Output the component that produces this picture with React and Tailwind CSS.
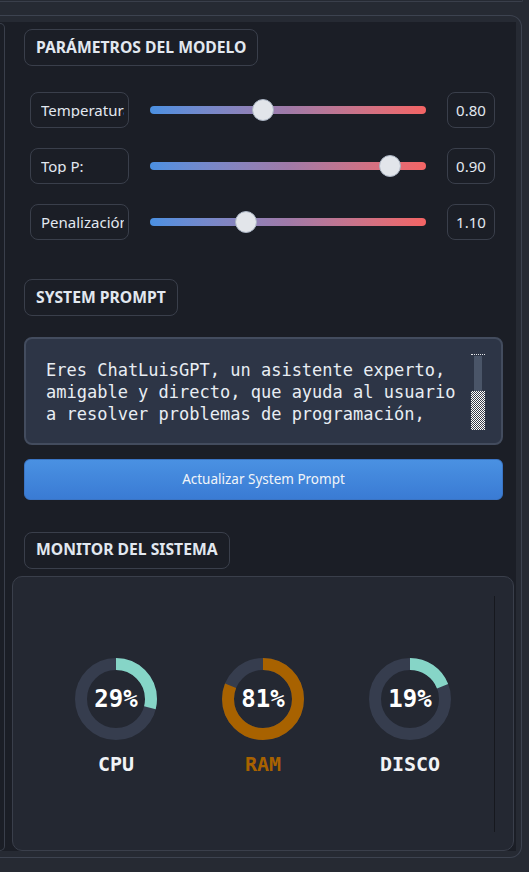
import React from "react";

const sliders = [
  { label: "Temperatura:", value: "0.80", pos: 0.4 },
  { label: "Top P:", value: "0.90", pos: 0.9 },
  { label: "Penalización:", value: "1.10", pos: 0.335 },
];

function Header({ children }) {
  return (
    <div className="self-start h-[37px] px-[11px] flex items-center rounded-[8px] border border-[#3a3f4b] text-[15.7px] font-bold text-[#e2e8f0] leading-none">
      {children}
    </div>
  );
}

function SliderRow({ label, value, pos }) {
  const trackW = 276;
  const thumb = 22;
  const left = pos * (trackW - thumb);
  return (
    <div className="flex items-center h-[36px] ml-[25px]">
      <div className="w-[99px] h-[36px] rounded-[8px] border border-[#3a3f4b] pl-[10px] pr-[4px] flex items-center overflow-hidden">
        <div className="overflow-hidden whitespace-nowrap text-[15px] text-[#e2e8f0] leading-none">{label}</div>
      </div>
      <div className="relative ml-[21px] w-[276px] h-[22px] flex items-center">
        <div className="w-full h-[8px] rounded-full bg-gradient-to-r from-[#4a90e2] via-[#a07aa8] to-[#f46464]" />
        <div
          className="absolute top-0 w-[22px] h-[22px] rounded-full bg-[#e2e5ea] border-[1.5px] border-[#a9b3c2]"
          style={{ left: `${left}px` }}
        />
      </div>
      <div className="ml-[21px] w-[48px] h-[36px] rounded-[8px] border border-[#3a3f4b] flex items-center justify-center text-[15px] text-[#e2e8f0] leading-none">
        {value}
      </div>
    </div>
  );
}

function Donut({ pct, color, label, labelColor }) {
  const r = 35;
  const c = 2 * Math.PI * r;
  return (
    <div className="w-[147px] flex flex-col items-center">
      <div className="relative w-[82px] h-[82px]">
        <svg width="82" height="82" viewBox="0 0 82 82" className="-rotate-90">
          <circle cx="41" cy="41" r={r} fill="none" stroke="#363d4e" strokeWidth="12" />
          <circle
            cx="41"
            cy="41"
            r={r}
            fill="none"
            stroke={color}
            strokeWidth="12"
            strokeDasharray={`${(pct / 100) * c} ${c}`}
          />
        </svg>
        <div className="absolute inset-0 flex items-center justify-center text-[24px] font-bold text-white leading-none font-['DejaVu_Sans_Mono',monospace]">
          {pct}%
        </div>
      </div>
      <div
        className="mt-[12px] text-[20px] leading-[24px] font-bold font-['DejaVu_Sans_Mono',monospace]"
        style={{ color: labelColor }}
      >
        {label}
      </div>
    </div>
  );
}

export default function App() {
  return (
    <div className="w-[529px] h-[872px] overflow-hidden bg-[#262a33] font-['Noto_Sans',sans-serif]">
      <div className="w-[523px] h-[2px] border-b border-r border-[#3a3f4b] rounded-br-[8px]" />
      <div className="mt-[13px] w-[522px] border-t border-r border-b border-[#3d4350] rounded-tr-[12px] rounded-br-[12px] pt-[6px] pr-[5px] pb-[6px]">
        <div className="bg-[#1b1e26] h-[829px] flex">
          <div className="w-[5px] mt-[1px] border-t border-r border-b border-[#3a3f4b] rounded-r-[8px]" />
          <div className="w-[510px] flex flex-col">
            <div className="mt-[7px] ml-[19px] flex">
              <Header>PARÁMETROS DEL MODELO</Header>
            </div>
            <div className="mt-[26px] flex flex-col gap-[20px]">
              {sliders.map((s) => (
                <SliderRow key={s.label} {...s} />
              ))}
            </div>
            <div className="mt-[39px] ml-[19px] flex">
              <Header>SYSTEM PROMPT</Header>
            </div>
            <div className="mt-[21px] ml-[19px] w-[479px] h-[108px] rounded-[8px] border-2 border-[#434c5e] bg-[#2d3546] relative overflow-hidden">
              <div className="pl-[20px] pt-[20px] text-[17px] leading-[22px] text-[#e8edf3] whitespace-pre font-['DejaVu_Sans_Mono',monospace]">
                {"Eres ChatLuisGPT, un asistente experto,\namigable y directo, que ayuda al usuario\na resolver problemas de programación,"}
              </div>
              <div className="absolute left-[445px] top-[15px] w-[14px] h-[76px] flex flex-col">
                <div className="h-[2px] border-t border-dotted border-[#e5e7eb]" />
                <div className="mx-[3px] h-[35px] bg-[#4a5568]" />
                <div className="flex-1 bg-[repeating-conic-gradient(#ffffff_0_25%,#3a3f4b_0_50%)] bg-[length:2px_2px]" />
              </div>
            </div>
            <button className="mt-[14px] ml-[19px] w-[479px] h-[41px] rounded-[6px] border border-[#3a74c4] bg-gradient-to-b from-[#4a91e2] to-[#3a7bd4] text-[13.5px] text-[#f1f5f9] font-['Noto_Sans',sans-serif] flex items-center justify-center">
              Actualizar System Prompt
            </button>
            <div className="mt-[32px] ml-[19px] flex">
              <Header>MONITOR DEL SISTEMA</Header>
            </div>
            <div className="mt-[7px] ml-[7px] w-[502px] h-[276px] rounded-[10px] border border-[#3a3f4b] bg-[#242832] relative">
              <div className="absolute left-[481px] top-[19px] bottom-[18px] w-[1px] bg-[#16181e]" />
              <div className="pt-[81px] flex justify-center">
                <Donut pct={29} color="#86d5c7" label="CPU" labelColor="#f1f3f6" />
                <Donut pct={81} color="#a86200" label="RAM" labelColor="#a86200" />
                <Donut pct={19} color="#86d5c7" label="DISCO" labelColor="#f1f3f6" />
              </div>
            </div>
          </div>
        </div>
      </div>
    </div>
  );
}
